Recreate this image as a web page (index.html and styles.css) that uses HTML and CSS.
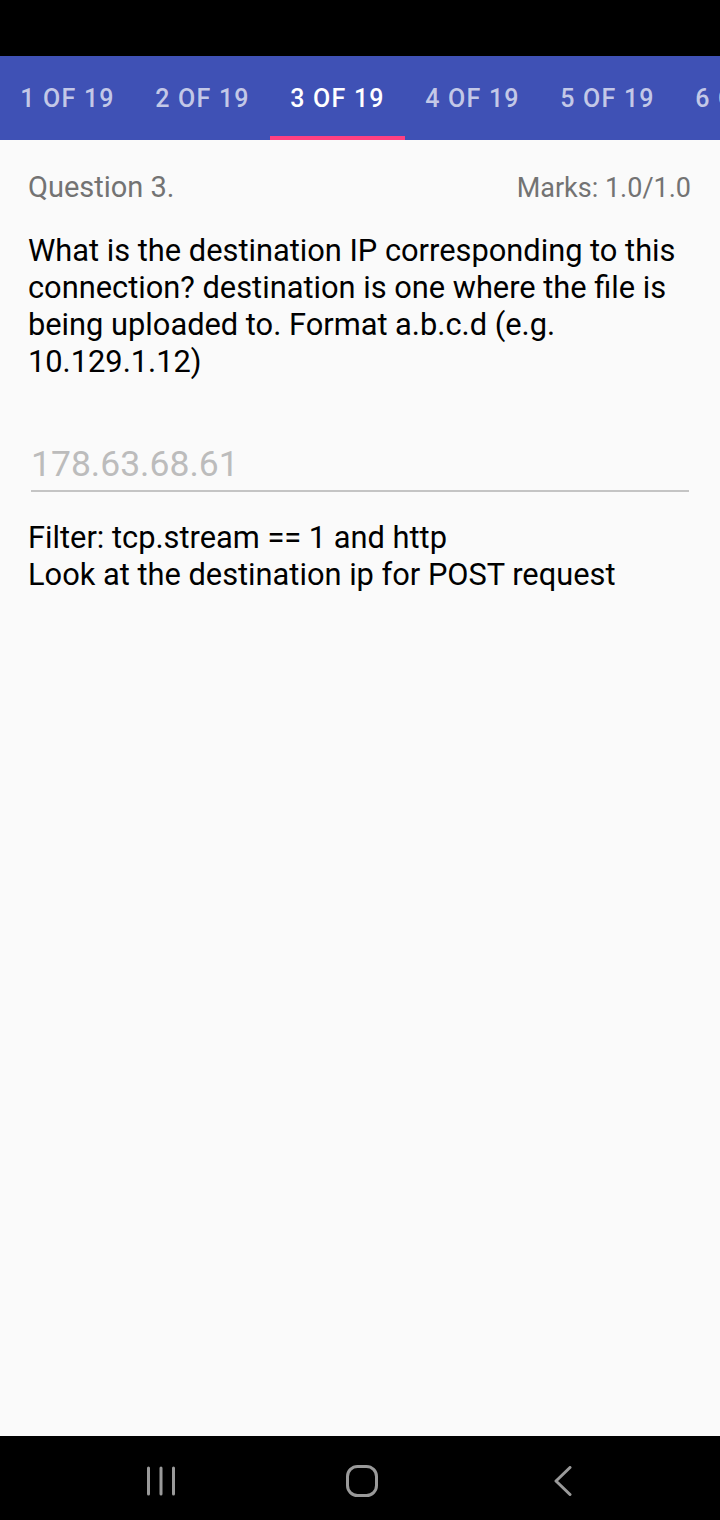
FILE: index.html
```html
<!DOCTYPE html>
<html>
<head>
<meta charset="utf-8">
<link rel="stylesheet" href="styles.css">
</head>
<body>
<div class="screen">
  <div class="status"></div>
  <div class="tabs">
    <div class="tab">1 OF 19</div>
    <div class="tab">2 OF 19</div>
    <div class="tab active">3 OF 19</div>
    <div class="tab">4 OF 19</div>
    <div class="tab">5 OF 19</div>
    <div class="tab">6 OF 19</div>
  </div>
  <main class="content">
    <div class="head">
      <span class="qnum">Question 3.</span>
      <span class="marks">Marks: 1.0/1.0</span>
    </div>
    <p class="qtext">What is the destination IP corresponding to this connection? destination is one where the file is being uploaded to. Format a.b.c.d (e.g. 10.129.1.12)</p>
    <div class="field"><span class="answer">178.63.68.61</span></div>
    <p class="hint">Filter: tcp.stream == 1 and http<br>Look at the destination ip for POST request</p>
  </main>
  <nav class="navbar">
    <div class="nav-slot">
      <svg width="28" height="30" viewBox="0 0 28 30"><g stroke="#9a9a9a" stroke-width="3" stroke-linecap="round"><line x1="1.5" y1="2" x2="1.5" y2="28"/><line x1="14" y1="2" x2="14" y2="28"/><line x1="26.5" y1="2" x2="26.5" y2="28"/></g></svg>
    </div>
    <div class="nav-slot">
      <svg width="32" height="32" viewBox="0 0 32 32"><rect x="1.5" y="1.5" width="29" height="29" rx="10" fill="none" stroke="#9a9a9a" stroke-width="3"/></svg>
    </div>
    <div class="nav-slot">
      <svg width="20" height="30" viewBox="0 0 20 30"><polyline points="17,1.5 3,15 17,28.5" fill="none" stroke="#9a9a9a" stroke-width="3" stroke-linecap="round" stroke-linejoin="round"/></svg>
    </div>
  </nav>
</div>
</body>
</html>
```

FILE: styles.css
```css
html, body {
  margin: 0;
  padding: 0;
}
body {
  font-family: Roboto, "Noto Sans", sans-serif;
  background: #fafafa;
}
.screen {
  width: 720px;
  height: 1520px;
  display: flex;
  flex-direction: column;
  overflow: hidden;
}
.status {
  height: 56px;
  background: #000;
  flex: none;
}
.tabs {
  height: 84px;
  background: #3f51b5;
  display: flex;
  flex: none;
  overflow: hidden;
}
.tab {
  flex: none;
  width: 135px;
  box-sizing: border-box;
  display: flex;
  align-items: center;
  justify-content: center;
  font-size: 25px;
  font-weight: 500;
  letter-spacing: 1.2px;
  color: rgba(255,255,255,0.7);
  border-bottom: 4px solid transparent;
  padding-top: 4px;
  white-space: nowrap;
}
.tab.active {
  color: #fff;
  border-bottom-color: #ff4081;
}
.content {
  flex: 1;
  background: #fafafa;
  padding: 0 28px;
}
.head {
  display: flex;
  justify-content: space-between;
  align-items: baseline;
  margin-top: 30px;
  color: #737373;
  line-height: 34px;
}
.qnum {
  font-size: 29px;
}
.marks {
  font-size: 27px;
  margin-right: 1px;
}
.qtext {
  margin: 27px 0 0;
  font-size: 30.8px;
  line-height: 37px;
  color: #000;
}
.field {
  margin: 62px 3px 0;
  border-bottom: 2px solid #c4c4c4;
  padding-bottom: 4px;
}
.answer {
  display: block;
  font-size: 35.5px;
  line-height: 44px;
  color: #bcbcbc;
}
.hint {
  margin: 27px 0 0;
  font-size: 30.8px;
  line-height: 37px;
  color: #000;
}
.navbar {
  height: 84px;
  background: #000;
  flex: none;
  display: flex;
  align-items: center;
  padding: 5px 56px 0 60px;
  box-sizing: border-box;
}
.nav-slot {
  flex: 1;
  display: flex;
  justify-content: center;
}
.nav-slot svg {
  display: block;
}
```
